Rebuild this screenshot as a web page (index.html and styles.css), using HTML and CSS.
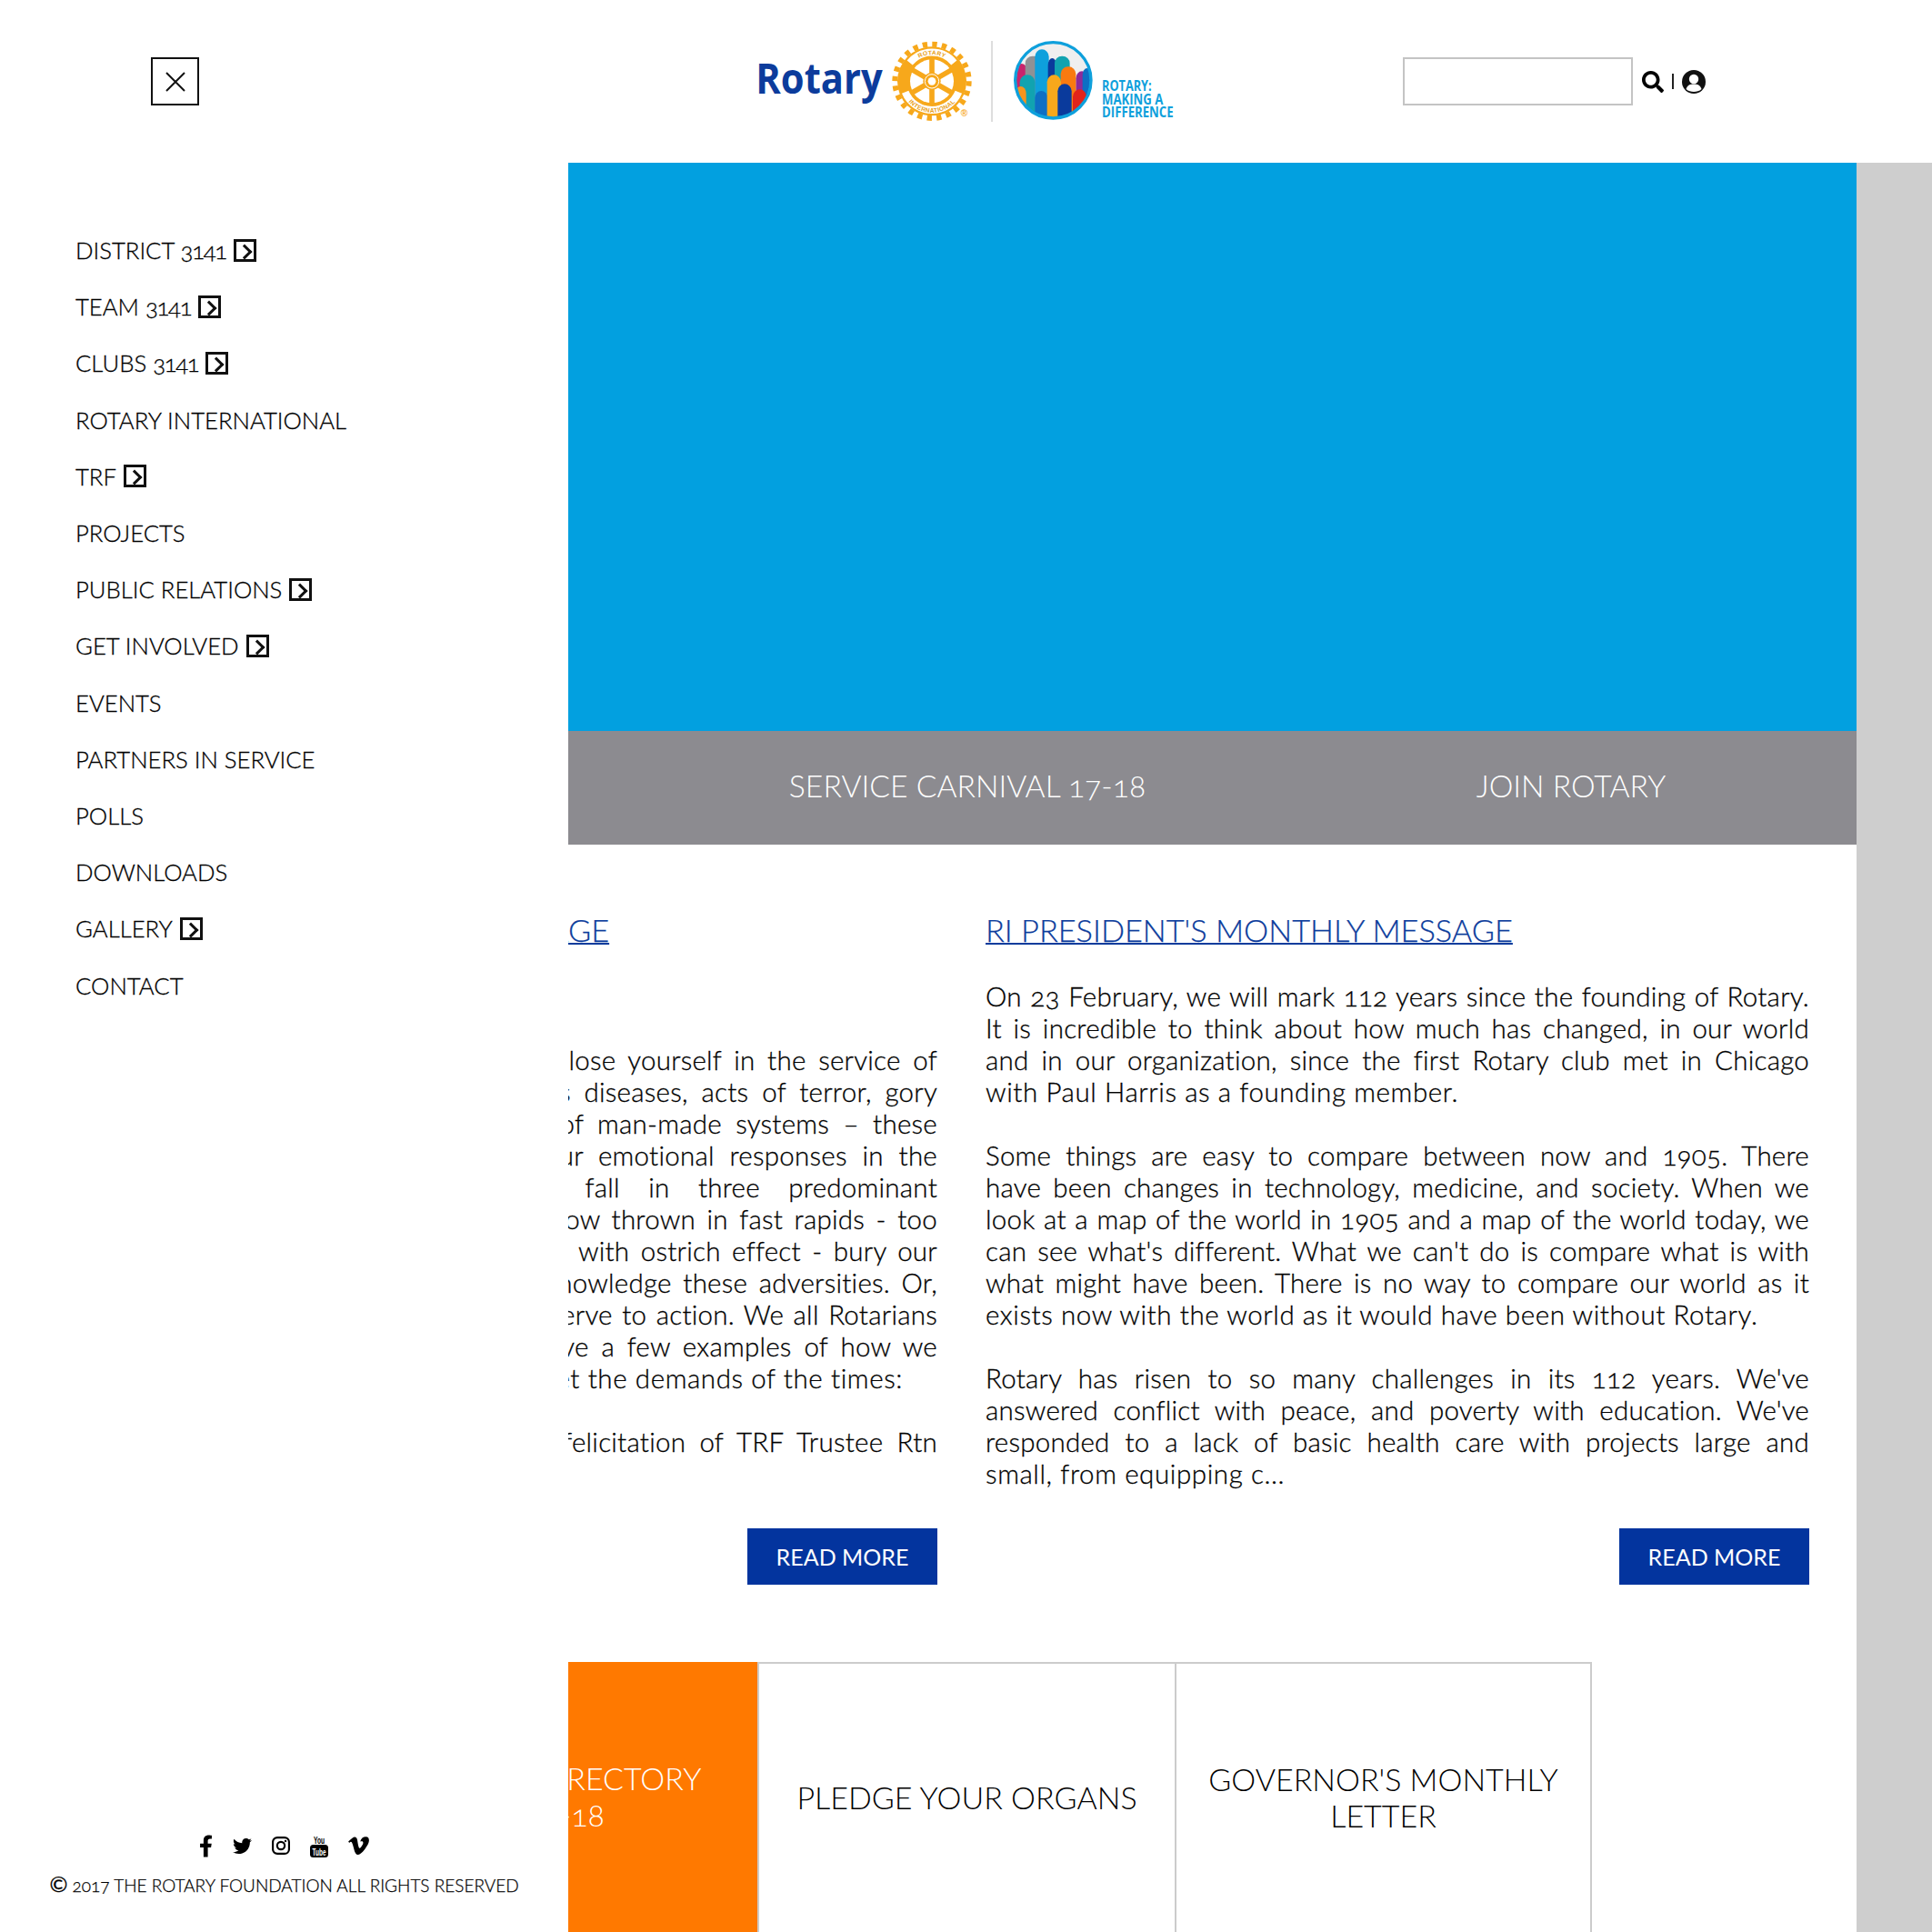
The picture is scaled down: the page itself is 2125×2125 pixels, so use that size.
FILE: index.html
```html
<!DOCTYPE html>
<html lang="en">
<head>
    <meta charset="UTF-8">
    <meta name="viewport" content="width=device-width, initial-scale=1.0">
    <title>Rotary District 3141</title>
    <link rel="stylesheet" href="styles.css">
</head>
<body>
    <header class="header">
        <button class="close-btn" aria-label="Close menu">
            <svg viewBox="0 0 24 24" width="24" height="24"><path d="M2 2 L22 22 M22 2 L2 22" stroke="#111" stroke-width="2" fill="none"/></svg>
        </button>
        <svg class="logo" viewBox="0 0 1560 390" width="520" height="130">
            <defs>
                <clipPath id="arch-clip"><circle cx="1075" cy="205" r="122"/></clipPath>
                <path id="ring-top" d="M608 152 A87 87 0 0 1 742 152"/>
                <path id="ring-bottom" d="M579.5 246.6 A103 103 0 0 0 770.5 246.6"/>
            </defs>
            <text class="logo-word" x="94" y="250" textLength="418" lengthAdjust="spacingAndGlyphs">Rotary</text>
            <circle cx="675" cy="208" r="122" fill="none" stroke="#f7a81b" stroke-width="18" stroke-dasharray="16 15.94"/>
            <circle cx="675" cy="208" r="114" fill="#f7a81b"/>
            <path d="M602 147 A95 95 0 0 1 748 147" fill="none" stroke="#fff" stroke-width="24"/>
            <path d="M587 244 A95 95 0 0 0 763 244" fill="none" stroke="#fff" stroke-width="24"/>
            <text class="ring-text"><textPath href="#ring-top" startOffset="50%" text-anchor="middle">ROTARY</textPath></text>
            <text class="ring-text"><textPath href="#ring-bottom" startOffset="50%" text-anchor="middle">INTERNATIONAL</textPath></text>
            <circle cx="675" cy="208" r="72" fill="#fff"/>
            <g stroke="#f7a81b" stroke-width="17">
                <path d="M675 132 V284"/>
                <path d="M609 170 L741 246"/>
                <path d="M609 246 L741 170"/>
            </g>
            <circle cx="675" cy="208" r="29" fill="#f7a81b"/>
            <circle cx="675" cy="208" r="23" fill="none" stroke="#fff" stroke-width="3"/>
            <circle cx="675" cy="208" r="13" fill="#fff"/>
            <text class="reg-mark" x="770" y="325">®</text>
            <path d="M873 75 V342" stroke="#bcbcbc" stroke-width="3"/>
            <circle cx="1075" cy="205" r="122" fill="#efefef"/>
            <g clip-path="url(#arch-clip)">
                <rect class="arch" x="950" y="150" width="40" fill="#c8246c"/>
                <rect class="arch" x="983" y="125" width="52" fill="#8f9195"/>
                <rect class="arch" x="1015" y="103" width="46" fill="#0ea0dc"/>
                <rect class="arch" x="1058" y="132" width="28" fill="#0a3a9c"/>
                <rect class="arch" x="1080" y="125" width="50" fill="#11a3b0"/>
                <rect class="arch" x="1150" y="175" width="40" fill="#8e2a9a"/>
                <rect class="arch" x="1172" y="165" width="30" fill="#0d6fc4"/>
                <rect class="arch" x="1100" y="160" width="50" fill="#f97a10"/>
                <rect class="arch" x="965" y="187" width="50" fill="#11a3b0"/>
                <rect class="arch" x="950" y="225" width="36" fill="#f7941d"/>
                <rect class="arch" x="1015" y="240" width="42" fill="#0d6fc4"/>
                <rect class="arch" x="1055" y="187" width="46" fill="#f7a81b"/>
                <rect class="arch" x="1090" y="217" width="46" fill="#0a3a9c"/>
                <rect class="arch" x="1140" y="235" width="45" fill="#e2231a"/>
            </g>
            <circle cx="1075" cy="205" r="125" fill="none" stroke="#0ea0dc" stroke-width="10"/>
            <text class="logo-tag" x="1236" y="240" textLength="164" lengthAdjust="spacingAndGlyphs">ROTARY:</text>
            <text class="logo-tag" x="1236" y="284" textLength="202" lengthAdjust="spacingAndGlyphs">MAKING A</text>
            <text class="logo-tag" x="1236" y="327" textLength="236" lengthAdjust="spacingAndGlyphs">DIFFERENCE</text>
        </svg>
        <div class="search">
            <input class="search-input" type="text" aria-label="Search">
            <svg class="search-icon" viewBox="0 0 512 512" width="24" height="24"><path d="M505 442.7L405.3 343c-4.5-4.5-10.6-7-17-7H372c27.6-35.3 44-79.7 44-128C416 93.1 322.9 0 208 0S0 93.1 0 208s93.1 208 208 208c48.3 0 92.7-16.4 128-44v16.3c0 6.4 2.5 12.5 7 17l99.7 99.7c9.4 9.4 24.6 9.4 33.9 0l28.3-28.3c9.4-9.4 9.4-24.6.1-34zM208 336c-70.7 0-128-57.2-128-128 0-70.7 57.2-128 128-128 70.7 0 128 57.2 128 128 0 70.7-57.2 128-128 128z"/></svg>
            <span class="search-sep"></span>
            <svg class="user-icon" viewBox="0 0 26 26" width="26" height="26">
                <circle cx="13" cy="13" r="13" fill="#111"/>
                <circle cx="13" cy="10" r="5.2" fill="#fff"/>
                <path d="M4.5 21 C6 16.5 9 15.5 13 15.5 C17 15.5 20 16.5 21.5 21 C19 23.2 16 24 13 24 C10 24 7 23.2 4.5 21 Z" fill="#fff"/>
            </svg>
        </div>
    </header>

    <div class="page">
        <aside class="sidebar">
            <ul class="nav">
                <li><span>DISTRICT <span class="num">3141</span></span><span class="nav-arrow"></span></li>
                <li><span>TEAM <span class="num">3141</span></span><span class="nav-arrow"></span></li>
                <li><span>CLUBS <span class="num">3141</span></span><span class="nav-arrow"></span></li>
                <li>ROTARY INTERNATIONAL</li>
                <li>TRF <span class="nav-arrow"></span></li>
                <li>PROJECTS</li>
                <li>PUBLIC RELATIONS <span class="nav-arrow"></span></li>
                <li>GET INVOLVED <span class="nav-arrow"></span></li>
                <li>EVENTS</li>
                <li>PARTNERS IN SERVICE</li>
                <li>POLLS</li>
                <li>DOWNLOADS</li>
                <li>GALLERY <span class="nav-arrow"></span></li>
                <li>CONTACT</li>
            </ul>
            <div class="side-footer">
                <div class="socials">
                    <svg viewBox="0 0 320 512" width="15" height="25"><path d="M279.14 288l14.22-92.66h-88.91v-60.13c0-25.35 12.42-50.06 52.24-50.06h40.42V6.26S260.43 0 225.36 0c-73.22 0-121.08 44.38-121.08 124.72v70.62H22.89V288h81.39v224h100.17V288z"/></svg>
                    <svg viewBox="0 0 512 512" width="21" height="21"><path d="M459.37 151.716c.325 4.548.325 9.097.325 13.645 0 138.72-105.583 298.558-298.558 298.558-59.452 0-114.68-17.219-161.137-47.106 8.447.974 16.568 1.299 25.34 1.299 49.055 0 94.213-16.568 130.274-44.832-46.132-.975-84.792-31.188-98.112-72.772 6.498.974 12.995 1.624 19.818 1.624 9.421 0 18.843-1.3 27.614-3.573-48.081-9.747-84.143-51.98-84.143-102.985v-1.299c13.969 7.797 30.214 12.67 47.431 13.319-28.264-18.843-46.781-51.005-46.781-87.391 0-19.492 5.197-37.36 14.294-52.954 51.655 63.675 129.3 105.258 216.365 109.807-1.624-7.797-2.599-15.918-2.599-24.04 0-57.828 46.782-104.934 104.934-104.934 30.213 0 57.502 12.67 76.67 33.137 23.715-4.548 46.456-13.32 66.599-25.34-7.798 24.366-24.366 44.833-46.132 57.827 21.117-2.273 41.584-8.122 60.426-16.243-14.292 20.791-32.161 39.308-52.628 54.253z"/></svg>
                    <svg viewBox="0 0 24 24" width="20" height="20"><rect x="1.3" y="1.3" width="21.4" height="21.4" rx="6" fill="none" stroke="#000" stroke-width="2.6"/><circle cx="12" cy="12" r="5" fill="none" stroke="#000" stroke-width="2.6"/><circle cx="18" cy="6" r="1.5"/></svg>
                    <svg viewBox="0 0 20 25" width="20" height="25">
                        <text class="yt-you" x="4" y="9.5" textLength="12" lengthAdjust="spacingAndGlyphs">You</text>
                        <rect x="0" y="11" width="20" height="14" rx="3.5"/>
                        <text class="yt-tube" x="2.5" y="22.5" textLength="15" lengthAdjust="spacingAndGlyphs">Tube</text>
                    </svg>
                    <svg viewBox="0 0 448 512" width="23" height="26"><path d="M447.8 153.6c-2 43.6-32.4 103.3-91.4 179.1-60.9 79.2-112.4 118.8-154.6 118.8-26.1 0-48.2-24.1-66.3-72.3C100.3 250 85.3 174.3 56.2 174.3c-3.4 0-15.1 7.1-35.2 21.1L0 168.2c51.6-45.3 100.9-95.7 131.8-98.5 34.9-3.4 56.3 20.5 64.4 71.5 28.7 181.5 41.4 208.9 93.6 126.7 18.7-29.6 28.8-52.1 30.2-67.6 4.8-45.9-35.8-42.8-63.3-31 22-72.1 64.1-107.1 126.2-105.1 45.8 1.2 67.5 31.1 64.9 89.4z"/></svg>
                </div>
                <p class="copyright"><span class="copy-mark">©</span> 2017 THE ROTARY FOUNDATION ALL RIGHTS RESERVED</p>
            </div>
        </aside>

        <main class="main">
            <div class="banner"></div>
            <div class="quick-bar">
                <a class="quick-link">SERVICE CARNIVAL 17-18</a>
                <a class="quick-link">JOIN ROTARY</a>
            </div>

            <div class="messages">
                <article class="message">
                    <a class="message-title">GOVERNOR'S MONTHLY MESSAGE</a>
                    <div class="message-text">
                        <span class="line">&nbsp;</span>
                        <span class="line">&nbsp;</span>
                        <span class="line just">“The best way to find yourself is to lose yourself in the service of</span>
                        <span class="line just">others.” Natural calamities, dangerous diseases, acts of terror, gory</span>
                        <span class="line just">wars, and the ever-present failures of man-made systems – these</span>
                        <span class="line just">are the adversities of our times. Our emotional responses in the</span>
                        <span class="line just">face of such severe adversities fall in three predominant</span>
                        <span class="line just">categories. Some of us feel we are now thrown in fast rapids - too</span>
                        <span class="line just">overwhelmed to act. Others, afflicted with ostrich effect - bury our</span>
                        <span class="line just">heads in the sand and refuse to acknowledge these adversities. Or,</span>
                        <span class="line just">we can gather our courage and our nerve to action. We all Rotarians</span>
                        <span class="line just">belong to this last category. I will give a few examples of how we</span>
                        <span class="line">in our District 3141 have risen to meet the demands of the times:</span>
                        <span class="line">&nbsp;</span>
                        <span class="line just">On 14 January we hosted a public felicitation of TRF Trustee Rtn</span>
                    </div>
                    <a class="read-more">READ MORE</a>
                </article>
                <article class="message">
                    <a class="message-title">RI PRESIDENT'S MONTHLY MESSAGE</a>
                    <div class="message-text">
                        <span class="line just">On 23 February, we will mark 112 years since the founding of Rotary.</span>
                        <span class="line just">It is incredible to think about how much has changed, in our world</span>
                        <span class="line just">and in our organization, since the first Rotary club met in Chicago</span>
                        <span class="line">with Paul Harris as a founding member.</span>
                        <span class="line">&nbsp;</span>
                        <span class="line just">Some things are easy to compare between now and 1905. There</span>
                        <span class="line just">have been changes in technology, medicine, and society. When we</span>
                        <span class="line just">look at a map of the world in 1905 and a map of the world today, we</span>
                        <span class="line just">can see what's different. What we can't do is compare what is with</span>
                        <span class="line just">what might have been. There is no way to compare our world as it</span>
                        <span class="line">exists now with the world as it would have been without Rotary.</span>
                        <span class="line">&nbsp;</span>
                        <span class="line just">Rotary has risen to so many challenges in its 112 years. We've</span>
                        <span class="line just">answered conflict with peace, and poverty with education. We've</span>
                        <span class="line just">responded to a lack of basic health care with projects large and</span>
                        <span class="line">small, from equipping c...</span>
                    </div>
                    <a class="read-more">READ MORE</a>
                </article>
            </div>

            <div class="cards">
                <div class="card card-orange">DISTRICT DIRECTORY<br>2017-18</div>
                <div class="card">PLEDGE YOUR ORGANS</div>
                <div class="card">GOVERNOR'S MONTHLY<br>LETTER</div>
            </div>
        </main>

        <div class="side-strip"></div>
    </div>
</body>
</html>
```

FILE: styles.css
```css
* {
    box-sizing: border-box;
}
html, body {
    height: 100%;
}
body {
    margin: 0;
    height: 2125px;
    overflow: hidden;
    background: #fff;
    color: #000;
    font-family: 'Lato', 'Open Sans', sans-serif;
    font-weight: 300;
    font-variant-numeric: oldstyle-nums;
    display: flex;
    flex-direction: column;
}

/* header */
.header {
    height: 179px;
    flex: none;
    display: flex;
    align-items: flex-start;
    padding: 20px 0 0 166px;
}
.close-btn {
    width: 53px;
    height: 53px;
    margin-top: 43px;
    padding: 0;
    background: #fff;
    border: 2px solid #111;
    display: flex;
    align-items: center;
    justify-content: center;
}
.logo {
    margin-left: 581px;
    flex: none;
}
.logo-word {
    font-family: 'Open Sans', sans-serif;
    font-weight: 700;
    font-size: 140px;
    font-variant-numeric: normal;
    fill: #0c3c9c;
}
.ring-text {
    font-family: 'Liberation Sans', sans-serif;
    font-weight: 700;
    font-size: 20px;
    letter-spacing: 1px;
    fill: #e8a020;
}
.reg-mark {
    font-family: 'Liberation Sans', sans-serif;
    font-weight: 700;
    font-size: 30px;
    fill: #f7a81b;
}
.arch {
    height: 260px;
    rx: 24px;
}
.logo-tag {
    font-family: 'Open Sans', sans-serif;
    font-weight: 700;
    font-size: 46px;
    fill: #0ea0dc;
}
.search {
    margin: 43px 0 0 223px;
    display: flex;
    align-items: center;
}
.search-input {
    width: 253px;
    height: 53px;
    border: 2px solid #c4c4c4;
    background: #fff;
    padding: 0 8px;
}
.search-icon {
    margin-left: 10px;
}
.search-sep {
    width: 2px;
    height: 17px;
    background: #222;
    margin: 0 9px;
}

/* page columns */
.page {
    flex: 1;
    min-height: 0;
    display: grid;
    grid-template-columns: 625px 1417px 83px;
}
.sidebar {
    display: flex;
    flex-direction: column;
    padding-top: 65px;
    background: #fff;
}
.nav {
    list-style: none;
    margin: 0;
    padding: 0 0 0 83px;
}
.nav li {
    height: 62.2px;
    display: flex;
    align-items: center;
    gap: 8px;
    font-size: 25.7px;
    -webkit-text-stroke: .3px;
}
.num {
    letter-spacing: -1.3px;
}
.nav-arrow {
    width: 25px;
    height: 25px;
    border: 3px solid #111;
    position: relative;
}
.nav-arrow::after {
    content: "";
    position: absolute;
    left: 3px;
    top: 5px;
    width: 9px;
    height: 9px;
    border-top: 3.5px solid #111;
    border-right: 3.5px solid #111;
    transform: rotate(45deg);
}
.side-footer {
    margin-top: auto;
    padding-bottom: 40px;
    text-align: center;
}
.socials {
    display: flex;
    justify-content: center;
    align-items: center;
    gap: 22px;
}
.yt-you {
    font-family: 'Liberation Sans', sans-serif;
    font-weight: 700;
    font-size: 10px;
    font-variant-numeric: normal;
}
.yt-tube {
    font-family: 'Liberation Sans', sans-serif;
    font-weight: 700;
    font-size: 10px;
    fill: #fff;
}
.copyright {
    margin: 17px 0 0;
    font-size: 19px;
    white-space: nowrap;
    -webkit-text-stroke: .25px;
}
.copy-mark {
    font-size: 24px;
    font-weight: 400;
    line-height: 1;
}

/* main column */
.main {
    overflow: hidden;
    min-width: 0;
}
.banner {
    height: 625px;
    background: #02a0e0;
}
.quick-bar {
    height: 125px;
    background: #8c8b90;
    display: flex;
    align-items: center;
    padding: 0 0 6px 107px;
}
.quick-link {
    width: 664px;
    flex: none;
    text-align: center;
    color: #fff;
    font-size: 33.7px;
}
.messages {
    display: flex;
    gap: 53px;
    margin-left: -500px;
    padding-top: 71px;
}
.message {
    width: 906px;
    flex: none;
    display: flex;
    flex-direction: column;
}
.message-title {
    color: #0c3c9c;
    font-size: 34.3px;
    line-height: 46px;
    text-decoration: underline;
    text-decoration-thickness: 2px;
    -webkit-text-stroke: .25px;
}
.message:first-child .message-title {
    margin-left: -5px;
}
.message-text {
    margin-top: 32px;
    font-size: 29.5px;
    line-height: 35px;
    height: 582px;
    -webkit-text-stroke: .3px;
}
.line {
    display: block;
    white-space: nowrap;
    letter-spacing: .6px;
}
.line.just {
    white-space: normal;
    letter-spacing: .25px;
    text-align: justify;
    text-align-last: justify;
}
.read-more {
    align-self: flex-end;
    width: 209px;
    height: 62px;
    margin-top: 21px;
    background: #03349e;
    color: #fff;
    font-size: 25px;
    font-weight: 400;
    display: flex;
    align-items: center;
    justify-content: center;
}
.cards {
    display: flex;
    margin-left: -251px;
    margin-top: 85px;
}
.card {
    width: 459px;
    height: 400px;
    flex: none;
    border: solid #ccc;
    border-width: 2px 0 0 2px;
    display: flex;
    align-items: center;
    justify-content: center;
    text-align: center;
    font-size: 34px;
    line-height: 40px;
    padding-bottom: 104px;
}
.card:last-child {
    border-right-width: 2px;
}
.card-orange {
    background: #ff7900;
    border: 0;
    color: #fff;
}
.side-strip {
    background: #cecece;
}
```
